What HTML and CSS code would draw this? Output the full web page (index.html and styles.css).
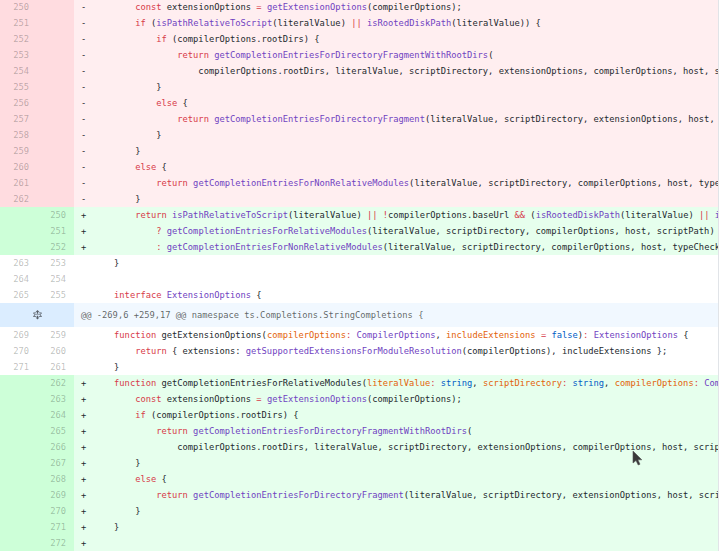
FILE: index.html
```html
<!DOCTYPE html>
<html>
<head>
<meta charset="utf-8">
<link rel="stylesheet" href="styles.css">
</head>
<body>
<div class="diff">
<div class="row del"><span class="num">250</span><span class="num"></span><span class="mark">-</span><span class="code">        <span class="k">const</span> extensionOptions <span class="k">=</span> <span class="f">getExtensionOptions</span>(compilerOptions);</span></div>
<div class="row del"><span class="num">251</span><span class="num"></span><span class="mark">-</span><span class="code">        <span class="k">if</span> (<span class="f">isPathRelativeToScript</span>(literalValue) <span class="k">||</span> <span class="f">isRootedDiskPath</span>(literalValue)) {</span></div>
<div class="row del"><span class="num">252</span><span class="num"></span><span class="mark">-</span><span class="code">            <span class="k">if</span> (compilerOptions.rootDirs) {</span></div>
<div class="row del"><span class="num">253</span><span class="num"></span><span class="mark">-</span><span class="code">                <span class="k">return</span> <span class="f">getCompletionEntriesForDirectoryFragmentWithRootDirs</span>(</span></div>
<div class="row del"><span class="num">254</span><span class="num"></span><span class="mark">-</span><span class="code">                    compilerOptions.rootDirs, literalValue, scriptDirectory, extensionOptions, compilerOptions, host, scriptPath);</span></div>
<div class="row del"><span class="num">255</span><span class="num"></span><span class="mark">-</span><span class="code">            }</span></div>
<div class="row del"><span class="num">256</span><span class="num"></span><span class="mark">-</span><span class="code">            <span class="k">else</span> {</span></div>
<div class="row del"><span class="num">257</span><span class="num"></span><span class="mark">-</span><span class="code">                <span class="k">return</span> <span class="f">getCompletionEntriesForDirectoryFragment</span>(literalValue, scriptDirectory, extensionOptions, host, scriptPath);</span></div>
<div class="row del"><span class="num">258</span><span class="num"></span><span class="mark">-</span><span class="code">            }</span></div>
<div class="row del"><span class="num">259</span><span class="num"></span><span class="mark">-</span><span class="code">        }</span></div>
<div class="row del"><span class="num">260</span><span class="num"></span><span class="mark">-</span><span class="code">        <span class="k">else</span> {</span></div>
<div class="row del"><span class="num">261</span><span class="num"></span><span class="mark">-</span><span class="code">            <span class="k">return</span> <span class="f">getCompletionEntriesForNonRelativeModules</span>(literalValue, scriptDirectory, compilerOptions, host, typeChecker);</span></div>
<div class="row del"><span class="num">262</span><span class="num"></span><span class="mark">-</span><span class="code">        }</span></div>
<div class="row add"><span class="num"></span><span class="num">250</span><span class="mark">+</span><span class="code">        <span class="k">return</span> <span class="f">isPathRelativeToScript</span>(literalValue) <span class="k">||</span> <span class="k">!</span>compilerOptions.baseUrl <span class="k">&amp;&amp;</span> (<span class="f">isRootedDiskPath</span>(literalValue) <span class="k">||</span> <span class="f">isUrl</span>(literalValue))</span></div>
<div class="row add"><span class="num"></span><span class="num">251</span><span class="mark">+</span><span class="code">            <span class="k">?</span> <span class="f">getCompletionEntriesForRelativeModules</span>(literalValue, scriptDirectory, compilerOptions, host, scriptPath)</span></div>
<div class="row add"><span class="num"></span><span class="num">252</span><span class="mark">+</span><span class="code">            <span class="k">:</span> <span class="f">getCompletionEntriesForNonRelativeModules</span>(literalValue, scriptDirectory, compilerOptions, host, typeChecker);</span></div>
<div class="row"><span class="num">263</span><span class="num">253</span><span class="mark"> </span><span class="code">    }</span></div>
<div class="row"><span class="num">264</span><span class="num">254</span><span class="mark"> </span><span class="code"></span></div>
<div class="row"><span class="num">265</span><span class="num">255</span><span class="mark"> </span><span class="code">    <span class="k">interface</span> <span class="f">ExtensionOptions</span> {</span></div>
<div class="row hunk"><span class="expand"><svg width="9" height="10" viewBox="0 0 14 16"><path fill="#586069" d="M11.5 7.5L14 10c0 .55-.45 1-1 1H9v-1h3.5l-2-2h-7l-2 2H5v1H1c-.55 0-1-.45-1-1l2.5-2.5L0 5c0-.55.45-1 1-1h4v1H1.5l2 2h7l2-2H9V4h4c.55 0 1 .45 1 1l-2.5 2.5zM6 6h2V3h2L7 0 4 3h2v3zm2 3H6v3H4l3 3 3-3H8V9z"/></svg></span><span class="hunktext">@@ -269,6 +259,17 @@ namespace ts.Completions.StringCompletions {</span></div>
<div class="row"><span class="num">269</span><span class="num">259</span><span class="mark"> </span><span class="code">    <span class="k">function</span> getExtensionOptions(<span class="p">compilerOptions</span><span class="k">:</span> <span class="f">CompilerOptions</span>, <span class="p">includeExtensions</span> <span class="k">=</span> <span class="c">false</span>)<span class="k">:</span> <span class="f">ExtensionOptions</span> {</span></div>
<div class="row"><span class="num">270</span><span class="num">260</span><span class="mark"> </span><span class="code">        <span class="k">return</span> { extensions: <span class="f">getSupportedExtensionsForModuleResolution</span>(compilerOptions), includeExtensions };</span></div>
<div class="row"><span class="num">271</span><span class="num">261</span><span class="mark"> </span><span class="code">    }</span></div>
<div class="row add"><span class="num"></span><span class="num">262</span><span class="mark">+</span><span class="code">    <span class="k">function</span> getCompletionEntriesForRelativeModules(<span class="p">literalValue</span><span class="k">:</span> <span class="c">string</span>, <span class="p">scriptDirectory</span><span class="k">:</span> <span class="c">string</span>, <span class="p">compilerOptions</span><span class="k">:</span> <span class="f">CompilerOptions</span>, <span class="p">host</span><span class="k">:</span> <span class="f">LanguageServiceHost</span>, <span class="p">scriptPath</span><span class="k">:</span> <span class="f">Path</span>) {</span></div>
<div class="row add"><span class="num"></span><span class="num">263</span><span class="mark">+</span><span class="code">        <span class="k">const</span> extensionOptions <span class="k">=</span> <span class="f">getExtensionOptions</span>(compilerOptions);</span></div>
<div class="row add"><span class="num"></span><span class="num">264</span><span class="mark">+</span><span class="code">        <span class="k">if</span> (compilerOptions.rootDirs) {</span></div>
<div class="row add"><span class="num"></span><span class="num">265</span><span class="mark">+</span><span class="code">            <span class="k">return</span> <span class="f">getCompletionEntriesForDirectoryFragmentWithRootDirs</span>(</span></div>
<div class="row add"><span class="num"></span><span class="num">266</span><span class="mark">+</span><span class="code">                compilerOptions.rootDirs, literalValue, scriptDirectory, extensionOptions, compilerOptions, host, scriptPath);</span></div>
<div class="row add"><span class="num"></span><span class="num">267</span><span class="mark">+</span><span class="code">        }</span></div>
<div class="row add"><span class="num"></span><span class="num">268</span><span class="mark">+</span><span class="code">        <span class="k">else</span> {</span></div>
<div class="row add"><span class="num"></span><span class="num">269</span><span class="mark">+</span><span class="code">            <span class="k">return</span> <span class="f">getCompletionEntriesForDirectoryFragment</span>(literalValue, scriptDirectory, extensionOptions, host, scriptPath);</span></div>
<div class="row add"><span class="num"></span><span class="num">270</span><span class="mark">+</span><span class="code">        }</span></div>
<div class="row add"><span class="num"></span><span class="num">271</span><span class="mark">+</span><span class="code">    }</span></div>
<div class="row add"><span class="num"></span><span class="num">272</span><span class="mark">+</span><span class="code"></span></div>
</div>
<svg class="cursor" width="11" height="16" viewBox="0 0 11 16"><path d="M1 1 L1 13 L4 10.5 L6.2 15 L8 14.2 L5.9 9.8 L9.8 9.8 Z" fill="#3a3a3a" stroke="#555" stroke-width="0.6"/></svg>
</body>
</html>
```
FILE: styles.css
```css
html, body {
  margin: 0;
  background: #fff;
}
.diff {
  width: 718px;
  border-right: 1px solid #e1e4e8;
  margin-top: -1px;
  font-family: "DejaVu Sans Mono", "Liberation Mono", monospace;
  font-size: 8.75px;
  overflow: hidden;
}
.row {
  display: flex;
  height: 16px;
  line-height: 16px;
  white-space: pre;
  background: #fff;
  color: #24292e;
}
.num {
  flex: none;
  width: 37px;
  box-sizing: border-box;
  padding-right: 8px;
  text-align: right;
  color: rgba(27, 31, 35, 0.3);
}
.mark {
  flex: none;
  width: 19px;
  box-sizing: border-box;
  padding-left: 7px;
}
.code {
  flex: 1;
  overflow: hidden;
}
.del { background: #ffeef0; }
.del .num { background: #ffdce0; }
.add { background: #e6ffed; }
.add .num { background: #cdffd8; }
.hunk {
  height: 24px;
  line-height: 24px;
  background: #f1f8ff;
  color: rgba(27, 31, 35, 0.7);
}
.expand {
  flex: none;
  width: 74px;
  background: #dbedff;
  display: flex;
  align-items: center;
  justify-content: center;
}
.hunktext {
  padding-left: 7px;
}
.k { color: #d73a49; }
.f { color: #6f42c1; }
.p { color: #e36209; }
.c { color: #005cc5; }
.cursor {
  position: absolute;
  left: 632px;
  top: 450px;
}
```
